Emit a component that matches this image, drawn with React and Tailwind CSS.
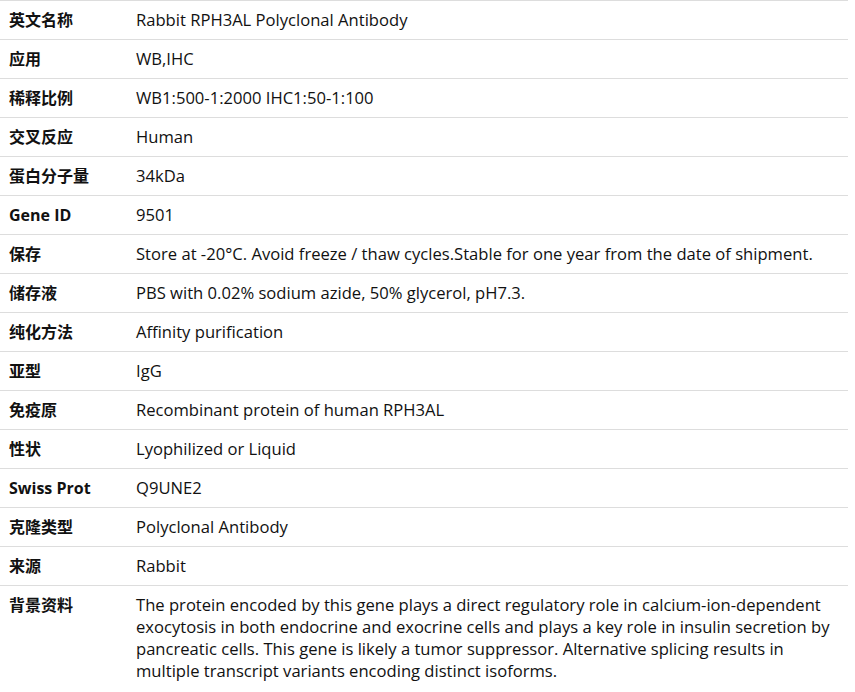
const rows = [
  ["英文名称", "Rabbit RPH3AL Polyclonal Antibody"],
  ["应用", "WB,IHC"],
  ["稀释比例", "WB1:500-1:2000 IHC1:50-1:100"],
  ["交叉反应", "Human"],
  ["蛋白分子量", "34kDa"],
  ["Gene ID", "9501"],
  ["保存", "Store at -20°C. Avoid freeze / thaw cycles.Stable for one year from the date of shipment."],
  ["储存液", "PBS with 0.02% sodium azide, 50% glycerol, pH7.3."],
  ["纯化方法", "Affinity purification"],
  ["亚型", "IgG"],
  ["免疫原", "Recombinant protein of human RPH3AL"],
  ["性状", "Lyophilized or Liquid"],
  ["Swiss Prot", "Q9UNE2"],
  ["克隆类型", "Polyclonal Antibody"],
  ["来源", "Rabbit"],
  [
    "背景资料",
    "The protein encoded by this gene plays a direct regulatory role in calcium-ion-dependent exocytosis in both endocrine and exocrine cells and plays a key role in insulin secretion by pancreatic cells. This gene is likely a tumor suppressor. Alternative splicing results in multiple transcript variants encoding distinct isoforms.",
  ],
];

export default function App() {
  return (
    <div
      className="w-[848px] bg-white text-[#111] leading-[22px]"
      style={{ fontFamily: '"Open Sans", "Noto Sans CJK SC", sans-serif' }}
    >
      {rows.map(([label, value]) => (
        <div key={label} className="flex border-t border-[#dddddd]">
          <div className="w-[127px] shrink-0 pl-[9px] py-2 font-bold text-[16px]">{label}</div>
          <div className="flex-1 pl-[9px] pr-2 py-2 text-[16.6px]">{value}</div>
        </div>
      ))}
    </div>
  );
}
